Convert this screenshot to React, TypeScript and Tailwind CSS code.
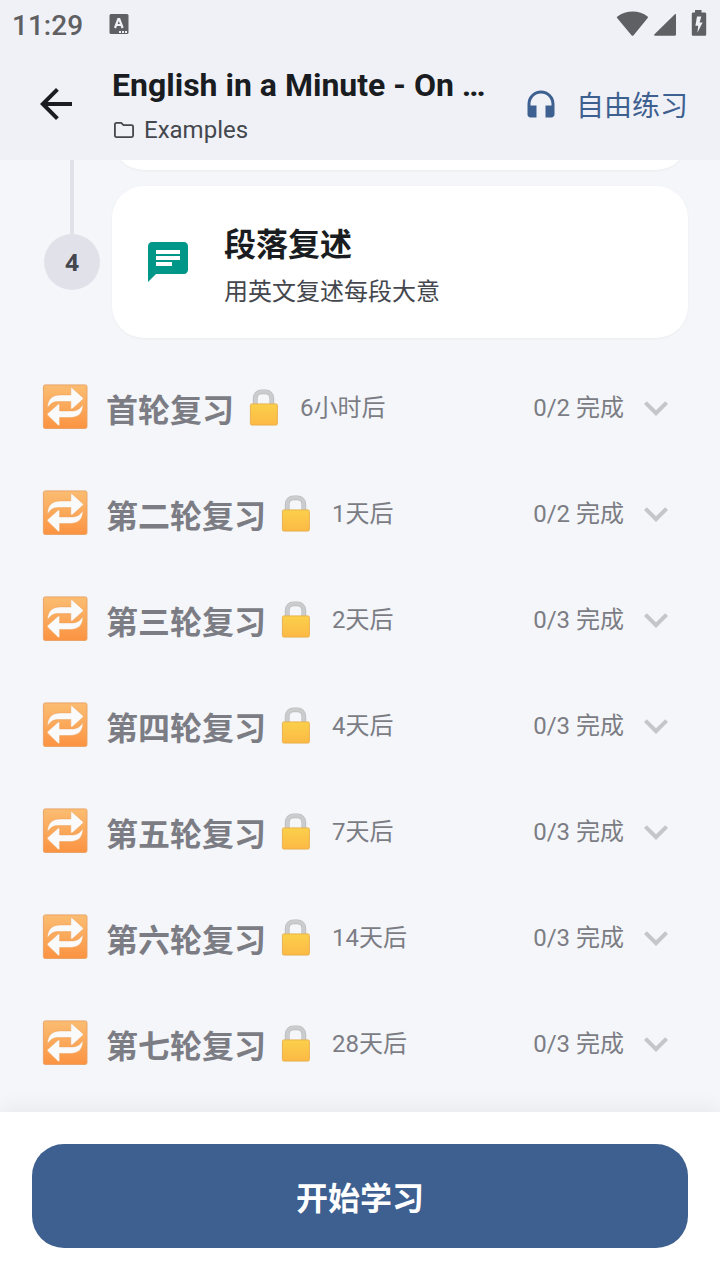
import { MdArrowBack, MdChat, MdExpandMore, MdHeadphones } from "react-icons/md";

const rounds = [
  { title: "首轮复习", due: "6小时后", progress: "0/2 完成" },
  { title: "第二轮复习", due: "1天后", progress: "0/2 完成" },
  { title: "第三轮复习", due: "2天后", progress: "0/3 完成" },
  { title: "第四轮复习", due: "4天后", progress: "0/3 完成" },
  { title: "第五轮复习", due: "7天后", progress: "0/3 完成" },
  { title: "第六轮复习", due: "14天后", progress: "0/3 完成" },
  { title: "第七轮复习", due: "28天后", progress: "0/3 完成" },
];

function StatusBar() {
  return (
    <div className="flex h-12 items-center justify-between px-3 text-[#5f6063]">
      <div className="flex items-center gap-[26px]">
        <span className="pt-1 text-[28px] leading-8 font-medium">11:29</span>
        <svg className="h-5 w-5" viewBox="0 0 20 20" aria-hidden="true">
          <rect x="0.5" width="19" height="20" rx="1.5" fill="currentColor" />
          <path d="M6 14 9.3 5h1l3.3 9M7.2 11h5.2" fill="none" stroke="#f0f1f7" strokeWidth="2.2" />
          <path d="M10 17h2v2h-2zM13 17h2v2h-2zM16 17h2v2h-2z" fill="#f0f1f7" />
        </svg>
      </div>
      <svg className="h-7 w-[92px]" viewBox="0 0 92 28" fill="currentColor" aria-hidden="true">
        <path d="M1.4 6.6C10-.1 23.4-.1 31.6 6.6c.5.4.5.9.1 1.4L17.4 25.4c-.5.6-1.2.6-1.7 0L1.1 8c-.4-.5-.3-1 .3-1.4Z" />
        <path d="M58.6 4.5c.8-.8 1.4-.5 1.4.5v19.5c0 .8-.4 1.2-1.2 1.2H39.2c-1.2 0-1.5-.6-.7-1.4Z" />
        <path
          fillRule="evenodd"
          d="M79 0h6.5v2.6h3.2c1 0 1.5.6 1.5 1.5v20.2c0 1-.5 1.5-1.5 1.5H77.3c-1 0-1.5-.5-1.5-1.5V4.1c0-.9.5-1.5 1.5-1.5H79Zm2 6.5-1.6 9.3h2.8l-.8 7 5.2-10.2h-3l1.7-6.1Z"
        />
      </svg>
    </div>
  );
}

function FolderIcon() {
  return (
    <svg className="h-6 w-6 shrink-0" viewBox="0 0 24 24" fill="none" stroke="currentColor" strokeWidth="1.8" aria-hidden="true">
      <path d="M4.3 4.9h4.9l2.3 2.3h8.1c.9 0 1.5.6 1.5 1.5v8.9c0 .9-.6 1.5-1.5 1.5H4.4c-.9 0-1.5-.6-1.5-1.5V6.4c0-.9.6-1.5 1.4-1.5Z" />
    </svg>
  );
}

function RepeatIcon() {
  return (
    <svg className="h-12 w-12 shrink-0" viewBox="0 0 48 48" aria-hidden="true">
      <defs>
        <linearGradient id="repeat-fill" x1="0" y1="0" x2="0" y2="1">
          <stop offset="0" stopColor="#fbbd72" />
          <stop offset="1" stopColor="#fb9342" />
        </linearGradient>
      </defs>
      <rect x="3.4" y="0.9" width="43.6" height="43.6" rx="1.8" fill="url(#repeat-fill)" stroke="#e9a062" strokeWidth="0.9" />
      <g fill="#fafafa" stroke="#eba25e" strokeWidth="0.5">
        <path d="M7.5 24.2c-.2-9 4.8-13.300 13-13.300h10.300V5.100c0-1.400.8-1.700 1.900-.7l10 9c.8.7.8 1.400 0 2.100l-10 9c-1.100 1-1.900.6-1.900-.8v-6.100H20c-6.300-.3-9.500 1.500-12.500 6.600Z" />
        <path d="M42.900 20.200c.2 9.300-4.800 13.300-13 13.300H19.600v6.800c0 1.400-.8 1.700-1.900.7l-9.800-9.600c-.8-.7-.8-1.400 0-2.100l9.800-8.700c1.100-1 1.900-.6 1.900.8v5.500h10.800c6.300.3 9.500-1.600 12.500-6.700Z" />
      </g>
    </svg>
  );
}

function LockIcon() {
  return (
    <svg className="h-10 w-10 shrink-0" viewBox="0 0 40 40" aria-hidden="true">
      <defs>
        <linearGradient id="lock-fill" x1="0" y1="0" x2="0" y2="1">
          <stop offset="0" stopColor="#fbd04b" />
          <stop offset="1" stopColor="#fcb945" />
        </linearGradient>
      </defs>
      <path d="M11.2 18v-7.500c0-4.200 2.700-6.700 6.500-6.700h3.600c3.800 0 6.500 2.500 6.500 6.700V18" fill="none" stroke="#b9babc" strokeWidth="4.8" />
      <path d="M11.2 18v-7.500c0-4.200 2.700-6.700 6.500-6.700h3.600c3.800 0 6.500 2.500 6.500 6.700V18" fill="none" stroke="#cbcccd" strokeWidth="3.4" />
      <rect x="6.4" y="15.9" width="27" height="21.2" rx="1.5" fill="url(#lock-fill)" stroke="#e8ae4a" strokeWidth="0.9" />
    </svg>
  );
}

function ReviewRow({ title, due, progress }: { title: string; due: string; progress: string }) {
  return (
    <li>
      <button type="button" aria-expanded="false" className="flex h-[106px] w-full items-center pt-0.5 pr-10 pl-10 text-[#7c7d84]">
        <RepeatIcon />
        <span className="ml-[18px] font-['Noto_Sans_CJK_SC',sans-serif] text-[32px] leading-10 font-bold">{title}</span>
        <span className="ml-2.5">
          <LockIcon />
        </span>
        <span className="ml-4 text-2xl">{due}</span>
        <span className="ml-auto text-2xl">{progress}</span>
        <MdExpandMore className="ml-2 h-12 w-12 shrink-0 text-[#c5c6ca]" />
      </button>
    </li>
  );
}

export default function App() {
  return (
    <div className="flex min-h-screen flex-col bg-[#f4f6fa] font-[Roboto,'Noto_Sans_CJK_SC',sans-serif] text-[#191c20]">
      <header className="sticky top-0 z-10 bg-[#f0f1f7]">
        <StatusBar />
        <div className="flex h-28 items-center px-8">
          <button type="button" aria-label="返回" className="shrink-0">
            <MdArrowBack className="h-12 w-12" />
          </button>
          <div className="ml-8 min-w-0 flex-1 pt-0.5">
            <h1 className="truncate text-[32px] leading-[50px] font-bold">English in a Minute - On …</h1>
            <p className="flex items-center gap-2 text-2xl leading-10 text-[#44474e]">
              <FolderIcon />
              Examples
            </p>
          </div>
          <button
            type="button"
            className="ml-6 flex shrink-0 items-center gap-[17px] font-['Noto_Sans_CJK_SC',sans-serif] text-[28px] leading-10 text-[#3d6090]"
          >
            <MdHeadphones className="h-9 w-9" />
            自由练习
          </button>
        </div>
      </header>

      <main className="flex-1 overflow-hidden pb-4">
        {/* Steps, scrolled so that only the foot of the third card shows */}
        <div className="-mt-[54px] pr-8 pl-11">
          <div className="flex gap-3">
            <div className="flex w-14 justify-center">
              <div className="w-1 bg-[#e1e2e9]" />
            </div>
            <div className="h-16 flex-1 rounded-b-[32px] bg-white shadow-[0_1px_3px_rgba(0,0,0,0.04)]" />
          </div>
          <div className="flex gap-3">
            <div className="flex w-14 flex-col items-center">
              <div className="h-16 w-1 bg-[#e1e2e9]" />
              <div className="flex h-14 w-14 items-center justify-center rounded-full bg-[#e1e2e9] font-['Noto_Sans',sans-serif] text-2xl font-bold text-[#44474e]">
                4
              </div>
            </div>
            <button
              type="button"
              className="mt-4 flex h-[152px] flex-1 items-center gap-8 rounded-[32px] bg-white px-8 text-left shadow-[0_1px_3px_rgba(0,0,0,0.04)]"
            >
              <MdChat className="h-12 w-12 shrink-0 text-[#009688]" />
              <span className="flex flex-col pt-2 font-['Noto_Sans_CJK_SC',sans-serif] leading-[48px]">
                <span className="text-[32px] font-bold">段落复述</span>
                <span className="text-[24px] text-[#44474e]">用英文复述每段大意</span>
              </span>
            </button>
          </div>
        </div>

        <ul className="mt-4">
          {rounds.map((round) => (
            <ReviewRow key={round.title} {...round} />
          ))}
        </ul>
      </main>

      <footer className="sticky bottom-0 bg-white p-8 shadow-[0_-4px_20px_rgba(0,0,0,0.06)]">
        <button
          type="button"
          className="h-[104px] w-full rounded-[32px] bg-[#3d6090] font-['Noto_Sans_CJK_SC',sans-serif] text-[32px] font-bold text-white"
        >
          开始学习
        </button>
      </footer>
    </div>
  );
}
